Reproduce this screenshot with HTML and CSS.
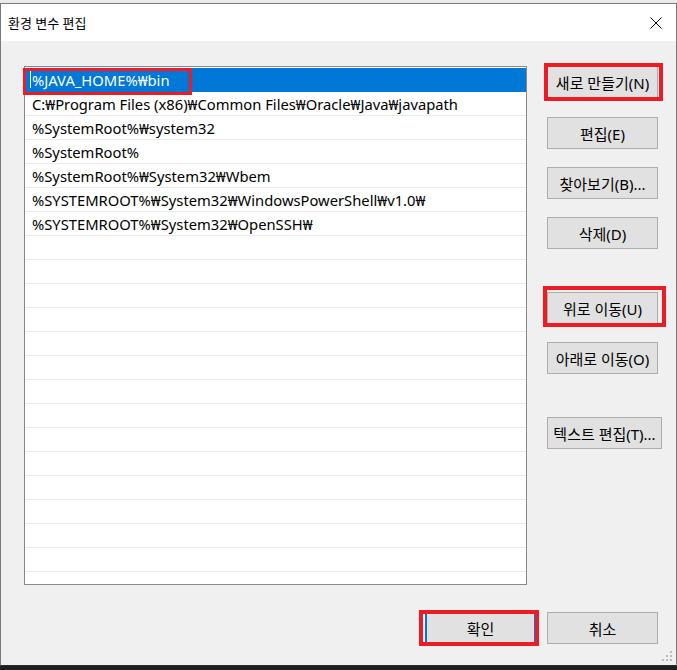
FILE: index.html
```html
<!DOCTYPE html>
<html lang="ko">
<head>
<meta charset="utf-8">
<title>환경 변수 편집</title>
<link rel="stylesheet" href="styles.css">
</head>
<body>
<div class="backdrop"></div>
<div class="window">
  <div class="titlebar">
    <span class="title">환경 변수 편집</span>
    <span class="close">
      <svg width="12" height="12" viewBox="0 0 12 12"><path d="M0.5 0.5 L11.5 11.5 M11.5 0.5 L0.5 11.5" stroke="#000" stroke-width="1" fill="none"/></svg>
    </span>
  </div>
  <div class="content">
    <div class="main">
      <div class="listbox">
        <div class="row selected"><span class="caret"></span><span class="text">%JAVA_HOME%₩bin</span><span class="mark mark-sel"></span></div>
        <div class="row"><span class="text">C:₩Program Files (x86)₩Common Files₩Oracle₩Java₩javapath</span></div>
        <div class="row"><span class="text">%SystemRoot%₩system32</span></div>
        <div class="row"><span class="text">%SystemRoot%</span></div>
        <div class="row"><span class="text">%SystemRoot%₩System32₩Wbem</span></div>
        <div class="row"><span class="text">%SYSTEMROOT%₩System32₩WindowsPowerShell₩v1.0₩</span></div>
        <div class="row"><span class="text">%SYSTEMROOT%₩System32₩OpenSSH₩</span></div>
        <div class="row"></div>
        <div class="row"></div>
        <div class="row"></div>
        <div class="row"></div>
        <div class="row"></div>
        <div class="row"></div>
        <div class="row"></div>
        <div class="row"></div>
        <div class="row"></div>
        <div class="row"></div>
        <div class="row"></div>
        <div class="row"></div>
        <div class="row"></div>
        <div class="row"></div>
      </div>
      <div class="buttons">
        <div class="btn btn-new">새로 만들기(N)<span class="mark mark-new"></span></div>
        <div class="btn gap-19">편집(E)</div>
        <div class="btn gap-18">찾아보기(B)...</div>
        <div class="btn gap-18">삭제(D)</div>
        <div class="btn gap-43">위로 이동(U)<span class="mark mark-up"></span></div>
        <div class="btn gap-18">아래로 이동(O)</div>
        <div class="btn gap-43 btn-wide">텍스트 편집(T)...</div>
      </div>
    </div>
    <div class="footer">
      <div class="btn btn-default">확인<span class="mark mark-ok"></span></div>
      <div class="btn">취소</div>
    </div>
    <svg class="grip" width="12" height="12" viewBox="0 0 12 12">
      <rect x="9" y="1" width="2" height="2" fill="#bdbdbd"/>
      <rect x="5" y="5" width="2" height="2" fill="#bdbdbd"/>
      <rect x="9" y="5" width="2" height="2" fill="#bdbdbd"/>
      <rect x="1" y="9" width="2" height="2" fill="#bdbdbd"/>
      <rect x="5" y="9" width="2" height="2" fill="#bdbdbd"/>
      <rect x="9" y="9" width="2" height="2" fill="#bdbdbd"/>
    </svg>
  </div>
</div>
</body>
</html>
```
FILE: styles.css
```css
* { box-sizing: border-box; }

html, body {
  margin: 0;
  padding: 0;
}

body {
  width: 677px;
  height: 670px;
  background: #1f1f1f;
  font-family: "Noto Sans", "Noto Sans CJK KR", sans-serif;
  font-size: 15px;
  color: #000;
  overflow: hidden;
}

.backdrop {
  height: 3px;
  background: #e9e9e9;
}

.window {
  position: relative;
  width: 677px;
  height: 663px;
  border: 1px solid #7a7a7a;
  border-bottom-color: #2a2a2a;
  background: #f0f0f0;
  display: flex;
  flex-direction: column;
}

.titlebar {
  height: 37px;
  background: #fff;
  display: flex;
  align-items: center;
  justify-content: space-between;
  padding: 0 14px 0 7px;
  flex: none;
}

.title {
  font-size: 13px;
  line-height: 20px;
}

.close {
  display: flex;
  width: 12px;
  height: 12px;
  margin-top: 1px;
}

.content {
  flex: 1;
  padding: 25px 18px 0 23px;
  display: flex;
  flex-direction: column;
}

.main {
  display: flex;
  gap: 20px;
  align-items: flex-start;
}

.listbox {
  width: 503px;
  height: 519px;
  border: 1px solid #878a91;
  background: #fff;
  padding: 1px 0 0 1px;
  flex: none;
}

.row {
  position: relative;
  height: 24px;
  border-bottom: 1px solid #eaeaea;
  display: flex;
  align-items: center;
  padding-left: 6px;
  white-space: nowrap;
  font-size: 14.75px;
}

.row.selected {
  background: #0078d7;
  color: #fff;
  border-bottom-color: #0078d7;
}

.caret {
  position: absolute;
  left: 4px;
  top: 3px;
  width: 1px;
  height: 17px;
  background: #fff;
}

.text {
  line-height: 20px;
}

.buttons {
  width: 111px;
  display: flex;
  flex-direction: column;
  align-items: flex-start;
  flex: none;
}

.btn {
  position: relative;
  width: 111px;
  height: 32px;
  background: #e1e1e1;
  border: 1px solid #adadad;
  display: flex;
  align-items: center;
  justify-content: center;
  white-space: nowrap;
  font-size: 15px;
}

.gap-18 { margin-top: 18px; }
.gap-19 { margin-top: 19px; }
.gap-43 { margin-top: 43px; }
.btn-wide { width: 115px; }

.footer {
  margin-top: 27px;
  display: flex;
  justify-content: flex-end;
  gap: 11px;
}

.btn-default {
  border: 2px solid #0078d7;
}

.mark {
  position: absolute;
  border: 4px solid #ed1c24;
  pointer-events: none;
}

.mark-sel {
  left: -3px;
  top: 0;
  width: 169px;
  height: 27px;
  border-width: 3px;
}

.mark-new {
  left: -4px;
  right: -6px;
  top: -4px;
  bottom: -4px;
}

.mark-up {
  left: -5px;
  right: -9px;
  top: -7px;
  bottom: -4px;
}

.mark-ok {
  left: -8px;
  right: -5px;
  top: -4px;
  bottom: -4px;
}

.grip {
  position: absolute;
  right: 3px;
  bottom: 3px;
}
```
